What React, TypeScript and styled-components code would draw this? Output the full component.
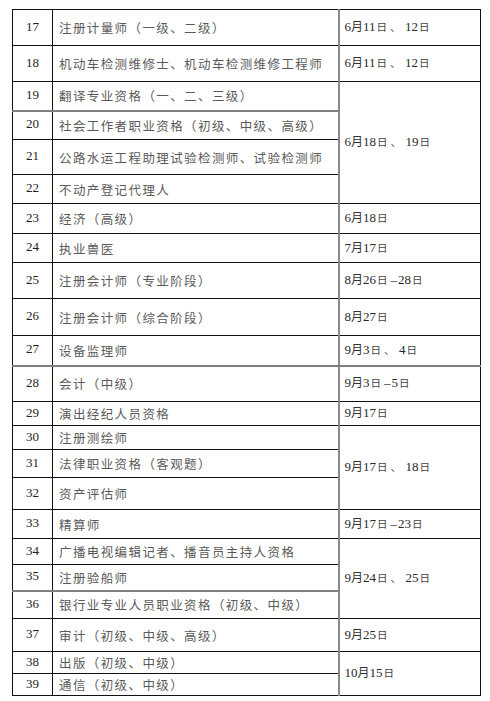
import React from "react";
import styled, { createGlobalStyle } from "styled-components";

const Global = createGlobalStyle`
  html, body { margin: 0; padding: 0; background: #fff; }
  body { font-family: "Liberation Serif", "Noto Sans CJK SC", serif; }
`;

const Page = styled.div`
  width: 490px;
  height: 701px;
  padding: 9px 10px 0 12px;
  box-sizing: border-box;
`;

const Table = styled.table`
  width: 468px;
  border-collapse: collapse;
  table-layout: fixed;
  border: 1px solid #111;
`;

type Line = "black" | "gray";

const Row = styled.tr<{ $h: number }>`
  height: ${(p) => p.$h}px;
`;

const NumCell = styled.td<{ $line: Line }>`
  width: 40px;
  padding: 0 0 2px 0;
  text-align: center;
  vertical-align: middle;
  font-family: "Liberation Serif", serif;
  font-size: 13px;
  color: #1e1e1e;
  border-left: 1px solid #111;
  border-bottom: ${(p) => (p.$line === "gray" ? "2px solid #808080" : "1px solid #111")};
`;

const NameCell = styled.td<{ $line: Line }>`
  padding: 0 0 0 6px;
  vertical-align: middle;
  font-family: "Noto Sans CJK SC", "Noto Sans", sans-serif;
  font-size: 12.5px;
  letter-spacing: 1.4px;
  color: #5a5a5a;
  white-space: nowrap;
  border-left: 1px solid #111;
  border-bottom: ${(p) => (p.$line === "gray" ? "2px solid #808080" : "1px solid #111")};
`;

const DateCell = styled.td<{ $line: Line }>`
  width: 142px;
  padding: 0 0 3px 5px;
  vertical-align: middle;
  font-family: "Liberation Serif", "Noto Sans CJK SC", serif;
  font-size: 13px;
  color: #2a2a2a;
  white-space: nowrap;
  border-left: 2px solid #8a8a8a;
  border-right: 1px solid #111;
  border-bottom: ${(p) => (p.$line === "gray" ? "2px solid #808080" : "1px solid #111")};
`;

const Yue = styled.span`
  font-family: "Noto Sans CJK SC", sans-serif;
  font-size: 12px;
  color: #333;
`;

const Ri = styled.span`
  font-family: "Noto Sans CJK SC", sans-serif;
  font-size: 10.5px;
  color: #444;
  margin: 0 1px;
`;

const Sep = styled.span`
  font-family: "Noto Sans CJK SC", sans-serif;
  font-size: 11px;
  color: #555;
  margin: 0 4px 0 2px;
`;

const Dash = styled.span`
  margin: 0 1px 0 2px;
`;

function DateText({ text }: { text: string }) {
  const parts: React.ReactNode[] = [];
  let buf = "";
  let k = 0;
  const flush = () => {
    if (buf) {
      parts.push(<span key={k++}>{buf}</span>);
      buf = "";
    }
  };
  for (const ch of text) {
    if (ch === "月") {
      flush();
      parts.push(<Yue key={k++}>月</Yue>);
    } else if (ch === "日") {
      flush();
      parts.push(<Ri key={k++}>日</Ri>);
    } else if (ch === "、") {
      flush();
      parts.push(<Sep key={k++}>、</Sep>);
    } else if (ch === "–") {
      flush();
      parts.push(<Dash key={k++}>–</Dash>);
    } else {
      buf += ch;
    }
  }
  flush();
  return <>{parts}</>;
}

type Item = {
  n: number;
  name: string;
  h: number;
  date?: string;
  span?: number;
  line?: Line;
  dateLine?: Line;
};

const rows: Item[] = [
  { n: 17, name: "注册计量师（一级、二级）", h: 36, date: "6月11日、12日" },
  { n: 18, name: "机动车检测维修士、机动车检测维修工程师", h: 36, date: "6月11日、12日" },
  { n: 19, name: "翻译专业资格（一、二、三级）", h: 29, date: "6月18日、19日", span: 4, line: "gray" },
  { n: 20, name: "社会工作者职业资格（初级、中级、高级）", h: 29 },
  { n: 21, name: "公路水运工程助理试验检测师、试验检测师", h: 35 },
  { n: 22, name: "不动产登记代理人", h: 29 },
  { n: 23, name: "经济（高级）", h: 30, date: "6月18日" },
  { n: 24, name: "执业兽医", h: 29, date: "7月17日" },
  { n: 25, name: "注册会计师（专业阶段）", h: 36, date: "8月26日–28日" },
  { n: 26, name: "注册会计师（综合阶段）", h: 37, date: "8月27日" },
  { n: 27, name: "设备监理师", h: 30, date: "9月3日、4日", line: "gray", dateLine: "gray" },
  { n: 28, name: "会计（中级）", h: 36, date: "9月3日–5日" },
  { n: 29, name: "演出经纪人员资格", h: 24, date: "9月17日" },
  { n: 30, name: "注册测绘师", h: 24, date: "9月17日、18日", span: 3 },
  { n: 31, name: "法律职业资格（客观题）", h: 28 },
  { n: 32, name: "资产评估师", h: 32 },
  { n: 33, name: "精算师", h: 29, date: "9月17日–23日" },
  { n: 34, name: "广播电视编辑记者、播音员主持人资格", h: 26, date: "9月24日、25日", span: 3 },
  { n: 35, name: "注册验船师", h: 26, line: "gray" },
  { n: 36, name: "银行业专业人员职业资格（初级、中级）", h: 28 },
  { n: 37, name: "审计（初级、中级、高级）", h: 33, date: "9月25日" },
  { n: 38, name: "出版（初级、中级）", h: 22, date: "10月15日", span: 2 },
  { n: 39, name: "通信（初级、中级）", h: 22 },
];

export default function App() {
  return (
    <Page>
      <Global />
      <Table>
        <colgroup>
          <col style={{ width: 40 }} />
          <col style={{ width: 286 }} />
          <col style={{ width: 142 }} />
        </colgroup>
        <tbody>
          {rows.map((r) => {
            const line: Line = r.line ?? "black";
            return (
              <Row key={r.n} $h={r.h}>
                <NumCell $line={line}>{r.n}</NumCell>
                <NameCell $line={line}>{r.name}</NameCell>
                {r.date && (
                  <DateCell $line={r.dateLine ?? "black"} rowSpan={r.span ?? 1}>
                    <DateText text={r.date} />
                  </DateCell>
                )}
              </Row>
            );
          })}
        </tbody>
      </Table>
    </Page>
  );
}
